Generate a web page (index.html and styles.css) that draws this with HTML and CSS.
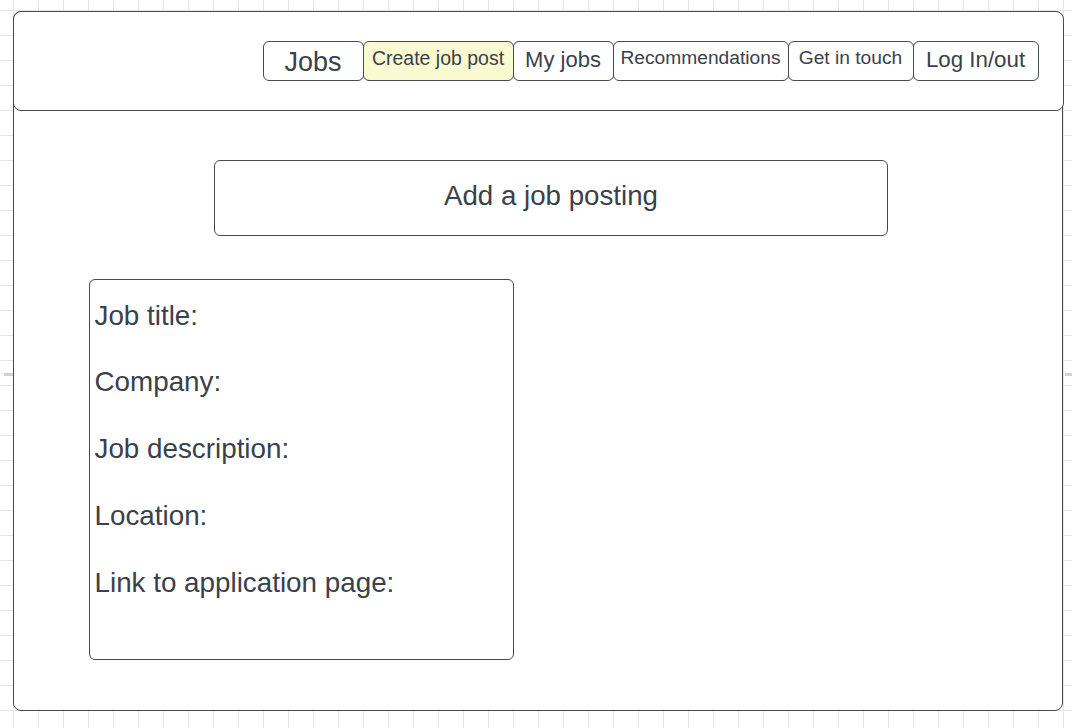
FILE: index.html
```html
<!DOCTYPE html>
<html lang="en">
<head>
<meta charset="utf-8">
<title>Jobs - Create job post</title>
<link rel="stylesheet" href="styles.css">
</head>
<body>
<div class="canvas">
  <span class="page-mark page-mark-left"></span>
  <span class="page-mark page-mark-right"></span>
  <div class="frame">
    <header class="header">
      <nav class="nav">
        <div class="nav-btn nav-jobs">Jobs</div>
        <div class="nav-btn nav-create is-active">Create job post</div>
        <div class="nav-btn nav-myjobs">My jobs</div>
        <div class="nav-btn nav-recs">Recommendations</div>
        <div class="nav-btn nav-touch">Get in touch</div>
        <div class="nav-btn nav-log">Log In/out</div>
      </nav>
    </header>
    <main class="content">
      <div class="title-box">Add a job posting</div>
      <div class="form-box">
        <div class="field">Job title:</div>
        <div class="field">Company:</div>
        <div class="field">Job description:</div>
        <div class="field">Location:</div>
        <div class="field">Link to application page:</div>
      </div>
    </main>
  </div>
</div>
</body>
</html>
```
FILE: styles.css
```css
* { box-sizing: border-box; }

html, body {
  margin: 0;
  padding: 0;
}

body {
  width: 1072px;
  height: 728px;
  overflow: hidden;
  font-family: "Liberation Sans", Arial, sans-serif;
  color: #3a414a;
  background-color: #ffffff;
  background-image:
    linear-gradient(to right, #e6e6e6 1px, transparent 1px),
    linear-gradient(to bottom, #e6e6e6 1px, transparent 1px);
  background-size: 25px 25px;
  background-position: 13px 10px;
}

.canvas {
  position: relative;
  width: 1072px;
  height: 728px;
  padding: 11px 9px 0 13px;
}

.page-mark {
  position: absolute;
  top: 373px;
  height: 3px;
  background: #d2d2d2;
}
.page-mark-left { left: 4px; width: 9px; }
.page-mark-right { left: 1065px; width: 7px; }

.frame {
  width: 1050px;
  height: 700px;
  border: 1.5px solid #464a52;
  border-radius: 8px;
  background: #ffffff;
  display: flex;
  flex-direction: column;
}

.header {
  margin: -1.5px -1.5px 0;
  height: 100px;
  border: 1.5px solid #464a52;
  border-radius: 8px;
  background: #ffffff;
  display: flex;
  align-items: center;
  justify-content: flex-end;
  padding-right: 24px;
}

.nav {
  display: flex;
  align-items: center;
}

.nav-btn {
  height: 40px;
  border: 1.5px solid #464a52;
  border-radius: 6px;
  background: #ffffff;
  display: flex;
  align-items: center;
  justify-content: center;
  white-space: nowrap;
  margin-left: -1px;
  padding-bottom: 5px;
  font-size: 19.5px;
}

.nav-jobs { width: 101px; font-size: 27px; padding-bottom: 0; padding-top: 3px; }
.nav-create { width: 151px; }
.nav-myjobs { width: 101px; font-size: 22px; padding-bottom: 2px; }
.nav-recs { width: 176px; font-size: 19.2px; }
.nav-touch { width: 126px; font-size: 19.2px; }
.nav-log { width: 126px; font-size: 22.3px; padding-bottom: 2px; }

.nav-btn.is-active { background: #fafad2; }

.content {
  flex: 1;
  display: flex;
  flex-direction: column;
  padding: 49px 0 0 74.5px;
}

.title-box {
  margin-left: 125.5px;
  width: 674px;
  height: 76px;
  border: 1.5px solid #464a52;
  border-radius: 6px;
  display: flex;
  align-items: center;
  justify-content: center;
  padding-bottom: 3px;
  font-size: 27.7px;
}

.form-box {
  margin-top: 43px;
  width: 425px;
  height: 381px;
  border: 1.5px solid #464a52;
  border-radius: 6px;
  padding: 3px 0 0 5px;
  font-size: 27.8px;
}

.field {
  height: 66.75px;
  line-height: 66.75px;
  white-space: nowrap;
}
```
